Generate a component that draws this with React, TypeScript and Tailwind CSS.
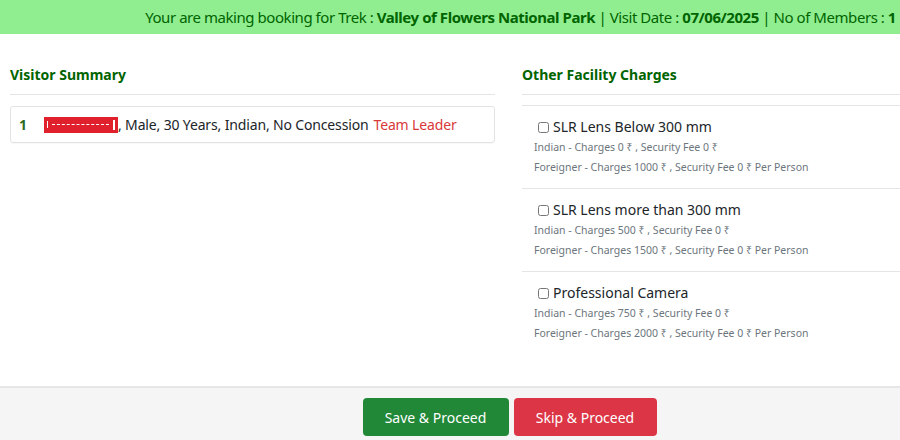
const facilities = [
  { name: 'SLR Lens Below 300 mm', indian: 0, foreigner: 1000 },
  { name: 'SLR Lens more than 300 mm', indian: 500, foreigner: 1500 },
  { name: 'Professional Camera', indian: 750, foreigner: 2000 },
];

export default function App() {
  return (
    <div className="w-[900px] h-[440px] bg-white flex flex-col font-['Noto_Sans',sans-serif] text-[#212529] overflow-hidden">
      {/* Booking banner */}
      <div className="h-[34px] bg-[#90ee90] flex items-center justify-end pr-[4px] text-[15px] text-[#006400] tracking-[-0.45px] shrink-0">
        <span>
          Your are making booking for Trek : <b>Valley of Flowers National Park</b> | Visit Date : <b>07/06/2025</b> | No of
          Members : <b>1</b>
        </span>
      </div>

      <div className="flex-1 flex gap-[27px] pl-[10px] pt-[31px]">
        {/* Visitor Summary */}
        <div className="w-[485px]">
          <h3 className="text-[14px] font-bold text-[#006400] leading-[20px] pb-[9px] border-b border-[#e5e5e5]">
            Visitor Summary
          </h3>
          <div className="mt-[11px] h-[37px] border border-[#e3e3e3] rounded-[3px] flex items-center pl-[8px] text-[14px] tracking-[-0.15px] shadow-[0_1px_1px_rgba(0,0,0,0.03)]">
            <span className="font-bold text-[#2d6a1e] w-[25px]">1</span>
            <span className="w-[74px] h-[16px] bg-[#e0202c] flex items-center px-[3px] gap-[4px]">
              <span className="w-[1px] h-[7px] bg-white" />
              <span className="flex-1 border-t border-dashed border-white" />
              <span className="w-[2px] h-[10px] bg-white" />
            </span>
            <span>, Male, 30 Years, Indian, No Concession</span>
            <span className="ml-[5px] text-[#d9383a]">Team Leader</span>
          </div>
        </div>

        {/* Other Facility Charges */}
        <div className="flex-1">
          <h3 className="text-[14px] font-bold text-[#006400] leading-[20px] pb-[9px] border-b border-[#e5e5e5]">
            Other Facility Charges
          </h3>
          <div className="mt-[10px] border-t border-[#e5e5e5]">
            {facilities.map((f) => (
              <div key={f.name} className="h-[83px] border-b border-[#e5e5e5] pl-[12px] pt-[11px] last:border-b-0">
                <label className="flex items-center gap-[4px] text-[14px] leading-[20px] pl-[4px]">
                  <input type="checkbox" className="w-[11px] h-[11px] accent-[#555]" />
                  <span>{f.name}</span>
                </label>
                <div className="text-[10.5px] text-[#6c757d] leading-[20px]">
                  Indian - Charges {f.indian} ₹ , Security Fee 0 ₹
                </div>
                <div className="text-[10.5px] text-[#6c757d] leading-[20px]">
                  Foreigner - Charges {f.foreigner} ₹ , Security Fee 0 ₹ Per Person
                </div>
              </div>
            ))}
          </div>
        </div>
      </div>

      {/* Actions */}
      <div className="h-[54px] shrink-0 bg-[#f5f5f5] border-t-2 border-[#e6e6e6] flex justify-center items-start pt-[10px] gap-[5px] pl-[119px]">
        <button className="w-[146px] h-[38px] rounded-[4px] bg-[#218838] text-white text-[14px]">Save &amp; Proceed</button>
        <button className="w-[143px] h-[38px] rounded-[4px] bg-[#dc3545] text-white text-[14px]">Skip &amp; Proceed</button>
      </div>
    </div>
  );
}
